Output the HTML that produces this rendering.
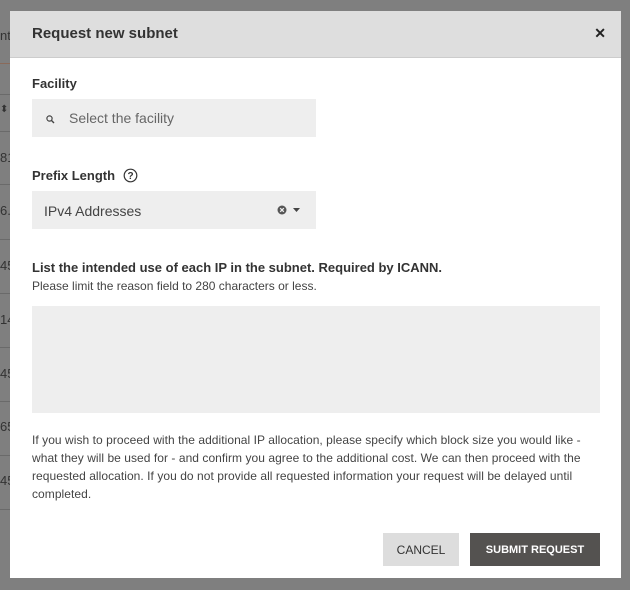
<!DOCTYPE html>
<html><head><style>
*{box-sizing:border-box;margin:0;padding:0}
body{width:630px;height:590px;background:#7f7f7f;font-family:"Liberation Sans",sans-serif;position:relative;overflow:hidden;color:#333}
.bgtxt{position:absolute;left:0;font-size:13px;color:#333;width:10px;overflow:hidden}
.bgl{position:absolute;left:0;width:10px;height:1px;background:#6a6a6a}
.modal{position:absolute;left:10px;top:11px;width:611px;height:567px;background:#fff}
.hdr{height:47px;background:#dedede;border-bottom:1px solid #ccc;position:relative}
.hdr h1{position:absolute;left:22px;top:14px;font-size:15px;font-weight:bold;color:#333}
.x{position:absolute;right:15px;top:14px;font-size:14px;font-weight:bold;color:#222}
.lbl{position:absolute;left:22px;font-size:13px;font-weight:bold;color:#333}
.box{position:absolute;left:22px;background:#eee}
.small{position:absolute;left:22px;font-size:12px;color:#444}
.btn{position:absolute;top:522px;height:33px;font-size:11px;font-weight:bold;display:flex;align-items:center;justify-content:center}
</style></head><body>
<div class="bgtxt" style="top:28px">nte</div>
<div class="bgl" style="top:63px;background:#8a6a5a"></div>
<div class="bgl" style="top:94px"></div>
<div class="bgtxt" style="top:104px;font-size:10px">⬍</div>
<div class="bgl" style="top:131px"></div>
<div class="bgtxt" style="top:150px">81</div>
<div class="bgl" style="top:184px"></div>
<div class="bgtxt" style="top:203px">6.</div>
<div class="bgl" style="top:239px"></div>
<div class="bgtxt" style="top:258px">45</div>
<div class="bgl" style="top:293px"></div>
<div class="bgtxt" style="top:312px">14</div>
<div class="bgl" style="top:347px"></div>
<div class="bgtxt" style="top:366px">45</div>
<div class="bgl" style="top:401px"></div>
<div class="bgtxt" style="top:419px">65</div>
<div class="bgl" style="top:455px"></div>
<div class="bgtxt" style="top:473px">45</div>
<div class="bgl" style="top:509px"></div>
<div class="modal">
<div class="hdr"><h1>Request new subnet</h1><div class="x">✕</div></div>
<div class="lbl" style="top:65px">Facility</div>
<div class="box" style="top:88px;width:284px;height:38px">
<svg style="position:absolute;left:14px;top:16px" width="9" height="9" viewBox="0 0 9 9"><circle cx="3.5" cy="3.5" r="2.6" fill="none" stroke="#444" stroke-width="1.2"/><line x1="5.4" y1="5.4" x2="8" y2="8" stroke="#444" stroke-width="1.4"/></svg>
<span style="position:absolute;left:37px;top:11px;font-size:14px;color:#666">Select the facility</span></div>
<div class="lbl" style="top:157px">Prefix Length
<svg style="vertical-align:-3px;margin-left:4px" width="15" height="15" viewBox="0 0 15 15"><circle cx="7.5" cy="7.5" r="6.3" fill="none" stroke="#333" stroke-width="1.2"/><text x="7.5" y="11" font-size="10" text-anchor="middle" font-family="Liberation Sans" fill="#333" font-weight="bold">?</text></svg></div>
<div class="box" style="top:180px;width:284px;height:38px">
<span style="position:absolute;left:12px;top:12px;font-size:14px;color:#444">IPv4 Addresses</span>
<svg style="position:absolute;left:245px;top:14px" width="10" height="10" viewBox="0 0 10 10"><circle cx="5" cy="5" r="4.5" fill="#555"/><path d="M3.2 3.2L6.8 6.8M6.8 3.2L3.2 6.8" stroke="#eee" stroke-width="1.3"/></svg>
<svg style="position:absolute;left:261px;top:17px" width="7" height="4" viewBox="0 0 7 4"><path d="M0 0H7L3.5 4Z" fill="#444"/></svg></div>
<div class="lbl" style="top:249px">List the intended use of each IP in the subnet. Required by ICANN.</div>
<div class="small" style="top:268px">Please limit the reason field to 280 characters or less.</div>
<div class="box" style="top:295px;width:568px;height:107px"></div>
<div class="small" style="top:420px;width:568px;line-height:18px;letter-spacing:0.05px">If you wish to proceed with the additional IP allocation, please specify which block size you would like - what they will be used for - and confirm you agree to the additional cost. We can then proceed with the requested allocation. If you do not provide all requested information your request will be delayed until completed.</div>
<div class="btn" style="left:373px;width:76px;background:#ddd;color:#333;font-weight:normal;font-size:12px">CANCEL</div>
<div class="btn" style="left:460px;width:130px;background:#545250;color:#fff">SUBMIT REQUEST</div>
</div>
</body></html>
